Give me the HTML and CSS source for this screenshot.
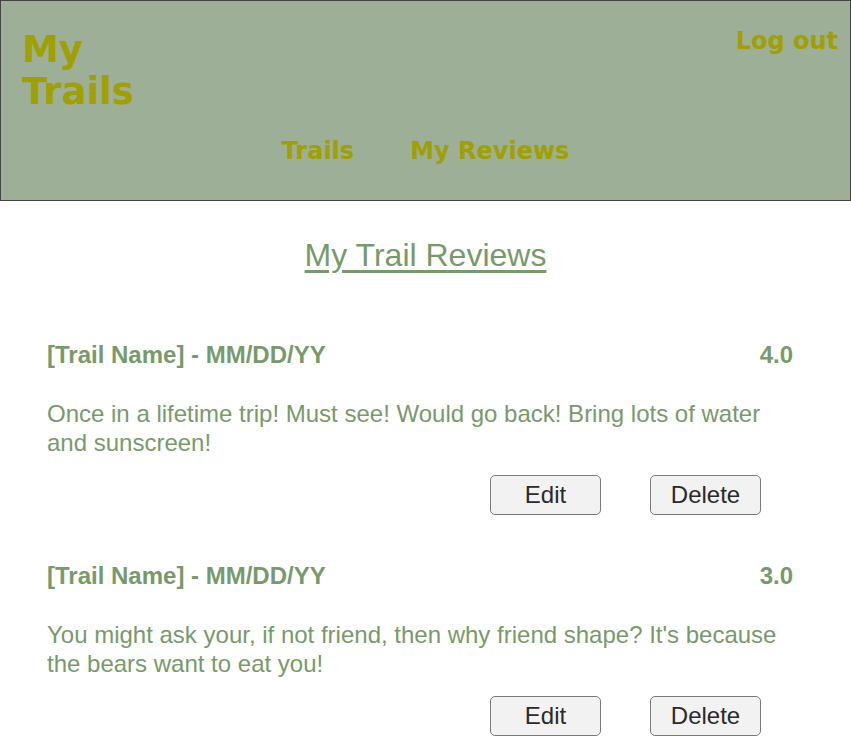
FILE: index.html
```html
<!DOCTYPE html>
<html lang="en">
<head>
<meta charset="utf-8">
<title>My Trails</title>
<link rel="stylesheet" href="styles.css">
</head>
<body>
<header class="site-header">
  <div class="header-top">
    <div class="brand">My<br>Trails</div>
    <a class="logout" href="#">Log out</a>
  </div>
  <nav class="main-nav">
    <a href="#">Trails</a>
    <a href="#">My Reviews</a>
  </nav>
</header>
<main class="content">
  <h1 class="page-title">My Trail Reviews</h1>
  <section class="review">
    <div class="review-head">
      <span>[Trail Name] - MM/DD/YY</span>
      <span>4.0</span>
    </div>
    <p class="review-text">Once in a lifetime trip! Must see! Would go back! Bring lots of water and sunscreen!</p>
    <div class="review-actions">
      <button class="btn">Edit</button>
      <button class="btn">Delete</button>
    </div>
  </section>
  <section class="review">
    <div class="review-head">
      <span>[Trail Name] - MM/DD/YY</span>
      <span>3.0</span>
    </div>
    <p class="review-text">You might ask your, if not friend, then why friend shape? It's because the bears want to eat you!</p>
    <div class="review-actions">
      <button class="btn">Edit</button>
      <button class="btn">Delete</button>
    </div>
  </section>
</main>
</body>
</html>
```
FILE: styles.css
```css
html, body {
  margin: 0;
  padding: 0;
  background: #ffffff;
}
body {
  font-family: "Liberation Sans", Arial, sans-serif;
}
.site-header {
  background: #9daf97;
  border: 1px solid #444444;
  height: 199px;
  box-sizing: content-box;
  padding: 0;
  font-family: "DejaVu Sans", Verdana, sans-serif;
  font-weight: bold;
  color: #a0a000;
}
.header-top {
  display: flex;
  justify-content: space-between;
  align-items: flex-start;
  padding: 0 12px 0 21px;
}
.brand {
  font-size: 37px;
  line-height: 42px;
  margin-top: 28px;
}
.logout {
  color: #a0a000;
  text-decoration: none;
  font-size: 24px;
  line-height: 28px;
  margin-top: 26px;
}
.main-nav {
  display: flex;
  justify-content: center;
  gap: 56px;
  margin-top: 24px;
  font-size: 24px;
  line-height: 28px;
}
.main-nav a {
  color: #a0a000;
  text-decoration: none;
}
.content {
  padding: 0 58px 0 47px;
  color: #789a6a;
}
.page-title {
  font-size: 32px;
  font-weight: normal;
  text-align: center;
  text-decoration: underline;
  text-underline-offset: 4px;
  margin: 36px 0 0 11px;
  line-height: 37px;
}
.review-head {
  display: flex;
  justify-content: space-between;
  font-size: 24px;
  font-weight: bold;
  line-height: 28px;
}
.review:first-of-type {
  margin-top: 67px;
}
.review + .review {
  margin-top: 47px;
}
.review-text {
  font-size: 24px;
  line-height: 29px;
  margin: 29.5px 0 0;
}
.review-actions {
  display: flex;
  justify-content: flex-end;
  gap: 49px;
  padding-right: 32px;
  margin-top: 18.5px;
}
.btn {
  width: 111px;
  height: 40px;
  background: #f2f2f2;
  border: 1px solid #7a7a7a;
  border-radius: 5px;
  font-family: "Liberation Sans", Arial, sans-serif;
  font-size: 24px;
  color: #2a2a2a;
  padding: 0;
}
```
